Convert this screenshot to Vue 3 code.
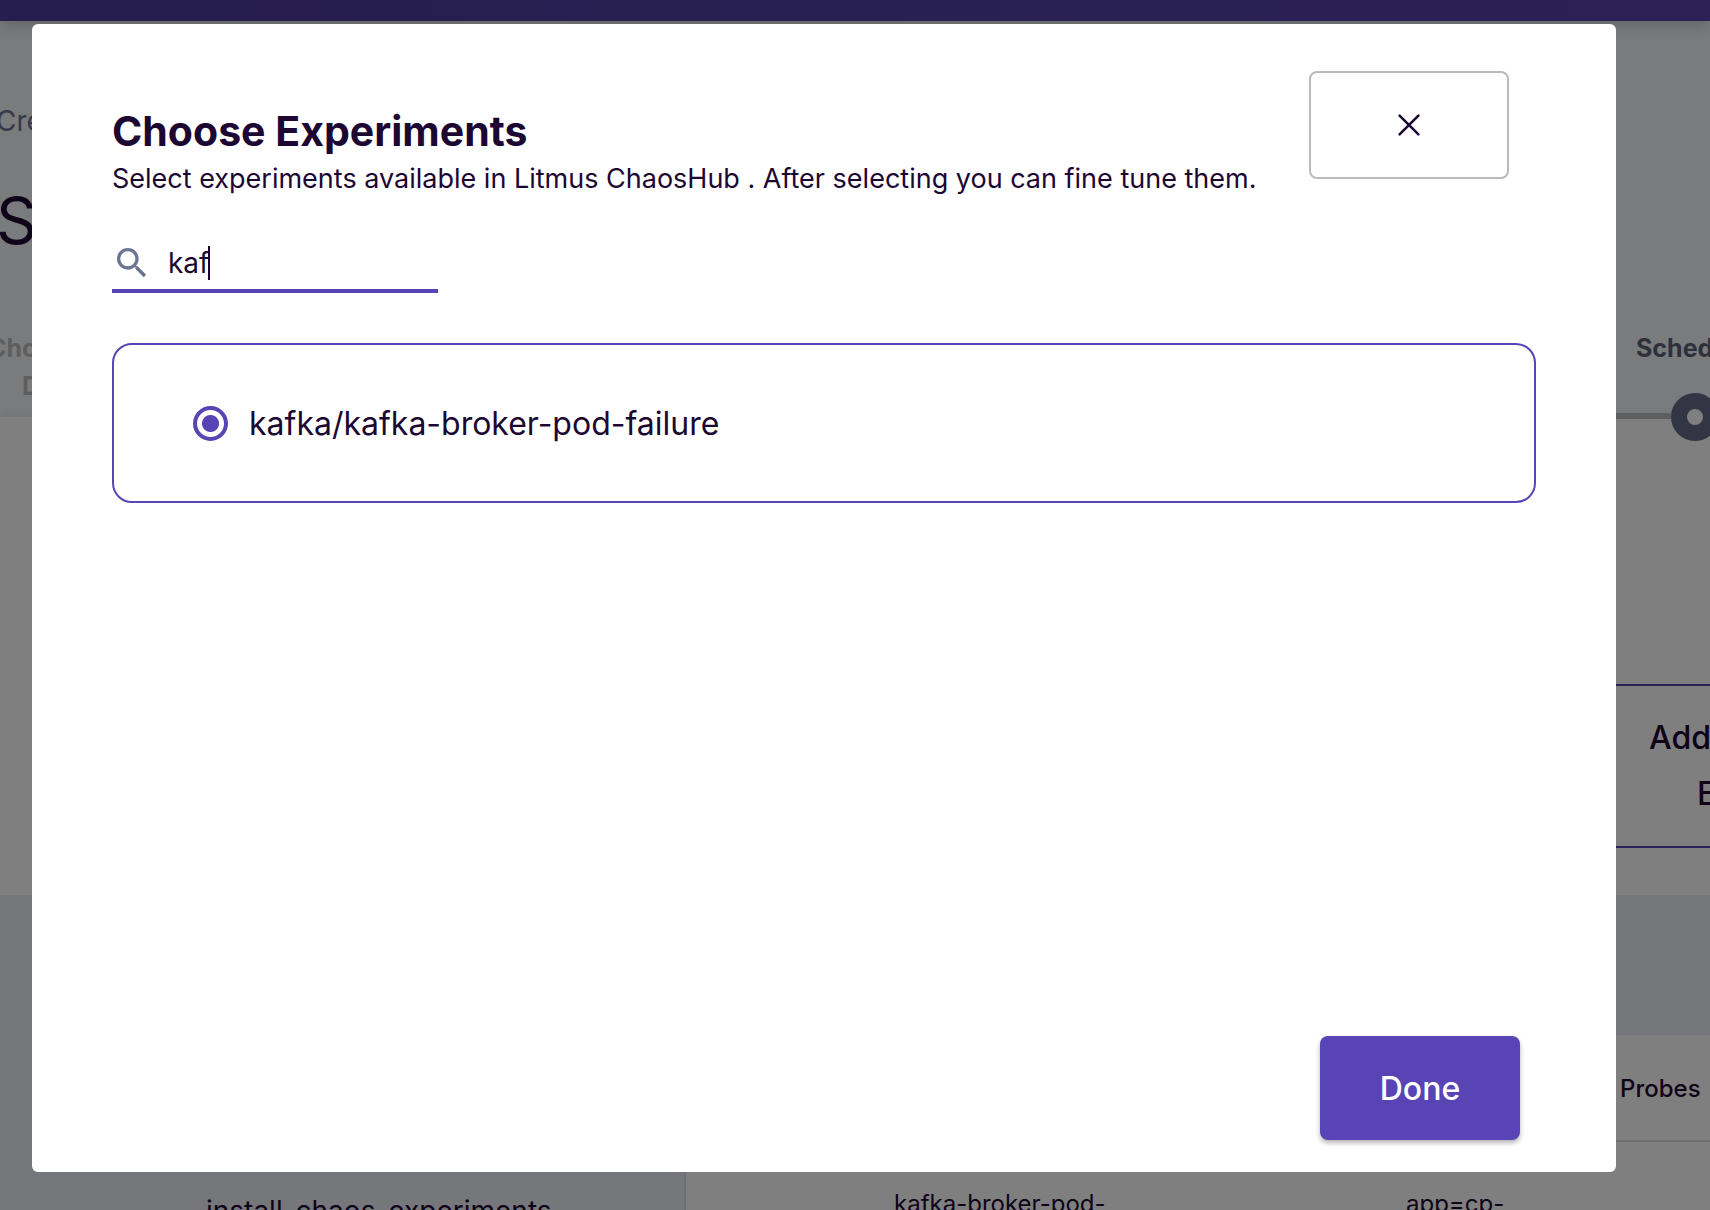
<script setup>
import { ref, onMounted } from 'vue'

const query = ref('kaf')
const experiments = ['kafka/kafka-broker-pod-failure']
const selected = ref(experiments[0])
const searchBox = ref(null)

onMounted(() => searchBox.value.focus())
</script>

<template>
  <div class="page">
    <header class="topbar"></header>
    <main class="wizard">
      <section class="intro">
        <p class="crumb">Cre</p>
        <h1 class="heading">S</h1>
        <div class="steps">
          <p class="step-done">Cho<br /><span class="step-second">D</span></p>
          <p class="step-next">Sched</p>
        </div>
      </section>
      <section class="panel">
        <div class="track">
          <span class="track-line"></span>
          <span class="track-dot"></span>
        </div>
        <button class="add" type="button">Add<br /><span class="add-second">E</span></button>
      </section>
      <section class="details">
        <div class="graph">install-chaos-experiments</div>
        <table class="table">
          <thead>
            <tr><th colspan="2"></th><th class="probes">Probes</th></tr>
          </thead>
          <tbody>
            <tr><td class="name">kafka-broker-pod-</td><td class="app">app=cp-</td><td></td></tr>
          </tbody>
        </table>
      </section>
    </main>

    <div class="overlay">
      <div class="modal" role="dialog" aria-labelledby="modal-title">
        <div class="modal-head">
          <div class="modal-titles">
            <h2 id="modal-title" class="title">Choose Experiments</h2>
            <p class="subtitle">Select experiments available in Litmus ChaosHub . After selecting you can fine tune them.</p>
          </div>
          <button class="close" type="button" aria-label="Close">
            <svg width="24" height="24" viewBox="0 0 28 28" fill="none" stroke="currentColor" stroke-width="3" stroke-linecap="round"><path d="M3 3 25 25M25 3 3 25" /></svg>
          </button>
        </div>
        <label class="search">
          <svg class="search-icon" width="40" height="40" viewBox="0 0 24 24" fill="currentColor" aria-hidden="true"><path d="M15.5 14h-.79l-.28-.27C15.41 12.59 16 11.11 16 9.5 16 5.91 13.09 3 9.5 3S3 5.91 3 9.5 5.91 16 9.5 16c1.61 0 3.09-.59 4.23-1.57l.27.28v.79l5 4.99L20.49 19l-4.99-5zm-6 0C7.01 14 5 11.99 5 9.5S7.01 5 9.5 5 14 7.01 14 9.5 11.99 14 9.5 14z" /></svg>
          <input ref="searchBox" v-model="query" class="search-input" type="text" aria-label="Search experiments" spellcheck="false" />
          <span class="caret" aria-hidden="true"></span>
        </label>
        <div class="list">
          <label v-for="name in experiments" :key="name" class="option">
            <input v-model="selected" class="radio" type="radio" name="experiment" :value="name" />
            <span>{{ name }}</span>
          </label>
        </div>
        <button class="done" type="button">Done</button>
      </div>
    </div>
  </div>
</template>

<style>
body {
  margin: 0;
}
</style>

<style scoped>
* {
  box-sizing: border-box;
}
.page {
  height: 100vh;
  overflow: hidden;
  display: flex;
  flex-direction: column;
  background: #f4f6f9;
  color: #1c0732;
  font-family: Inter, sans-serif;
  font-size: 28px;
}
p,
h1,
h2 {
  margin: 0;
}
button {
  font: inherit;
}
.topbar {
  flex: none;
  height: 21px;
  background: linear-gradient(90deg, #4c3c9c, #5642ae);
  box-shadow: 0 4px 16px rgba(0, 0, 0, 0.2);
  z-index: 1;
}
.wizard {
  flex: 1;
  min-height: 0;
  display: flex;
  flex-direction: column;
}
.intro {
  flex: none;
  height: 396px;
  padding-top: 80px;
}
.crumb {
  margin-left: -4px;
  line-height: 40px;
  color: #72728f;
}
.heading {
  margin: 40px 0 0 -4px;
  font-size: 64px;
  font-weight: 400;
  line-height: 80px;
}
.steps {
  display: flex;
  justify-content: space-between;
  margin-top: 68px;
  font-size: 25px;
  font-weight: 700;
  line-height: 38px;
}
.step-done {
  margin-left: -12px;
  color: #bcbcbe;
}
.step-second {
  margin-left: 34px;
}
.step-next {
  width: 74px;
  color: #5e6076;
}
.panel {
  flex: none;
  height: 478px;
  background: #fff;
  box-shadow: 0 -1px 12px rgba(0, 0, 0, 0.08);
  display: flex;
  flex-direction: column;
  align-items: flex-end;
}
.track {
  display: flex;
  align-items: center;
  height: 48px;
  margin: -24px -9px 0 0;
}
.track-line {
  width: 80px;
  height: 6px;
  margin-top: -2px;
  background: #bcbcbc;
}
.track-dot {
  width: 48px;
  height: 48px;
  border: 16px solid #686a88;
  border-radius: 50%;
  background: #fff;
}
.add {
  width: 160px;
  height: 164px;
  margin-top: 243px;
  padding: 0 0 0 99px;
  border: solid #5844b4;
  border-width: 2px 0;
  background: none;
  color: #1c0732;
  font-size: 32px;
  font-weight: 500;
  line-height: 56px;
  text-align: left;
}
.add-second {
  margin-left: 48px;
}
.details {
  flex: 1;
  min-height: 0;
  display: flex;
  align-items: flex-start;
  padding-top: 140px;
  background: #edeff7;
}
.graph {
  flex: none;
  width: 40%;
  padding: 156px 0 0 206px;
  line-height: 40px;
}
.table {
  flex: none;
  width: 60%;
  border-collapse: collapse;
  background: #fff;
  border-left: 2px solid #dcdce4;
  font-size: 24px;
  height: 240px;
}
.table th,
.table td {
  padding: 0;
  text-align: left;
  vertical-align: top;
}
.table th {
  height: 106px;
  border-bottom: 2px solid #dcdcdc;
  vertical-align: middle;
  padding-top: 2px;
}
.table .probes {
  width: 90px;
  font-weight: 500;
}
.table td {
  line-height: 32px;
  padding-top: 46px;
}
.table .name {
  padding-left: 208px;
}
.table .app {
  width: 214px;
}
.overlay {
  position: fixed;
  inset: 0;
  z-index: 2;
  display: flex;
  padding: 24px 94px 38px 32px;
  background: rgba(0, 0, 0, 0.5);
}
.modal {
  flex: 1;
  display: flex;
  flex-direction: column;
  padding: 47px 80px 32px;
  border-radius: 6px;
  background: #fff;
}
.modal-head {
  display: flex;
  justify-content: space-between;
  padding-right: 27px;
}
.modal-titles {
  padding-top: 36px;
}
.title {
  font-size: 41px;
  font-weight: 700;
  line-height: 48px;
}
.subtitle {
  font-size: 27px;
  line-height: 48px;
  white-space: nowrap;
}
.close {
  width: 200px;
  height: 108px;
  flex: none;
  display: flex;
  align-items: center;
  justify-content: center;
  border: 2px solid #bababa;
  border-radius: 8px;
  background: none;
  color: #1c0732;
}
.search {
  position: relative;
  display: flex;
  align-items: center;
  width: 326px;
  height: 60px;
  margin-top: 30px;
  padding-top: 4px;
  border-bottom: 4px solid #5844b4;
}
.search-icon {
  flex: none;
  color: #6b7490;
}
.search-input {
  flex: 1;
  min-width: 0;
  height: 40px;
  padding: 0;
  margin-left: 16px;
  border: 0;
  outline: 0;
  background: none;
  color: inherit;
  font: inherit;
  caret-color: transparent;
}
.caret {
  position: absolute;
  left: 96px;
  top: 13px;
  width: 2px;
  height: 34px;
  background: #1c0732;
}
.list {
  flex: 1;
  margin-top: 50px;
}
.option {
  display: flex;
  align-items: center;
  height: 160px;
  padding-left: 79px;
  border: 2px solid #5844b4;
  border-radius: 20px;
  font-size: 32px;
}
.radio {
  appearance: none;
  width: 35px;
  height: 35px;
  margin: 0 21px 0 0;
  border: 4px solid #5844b4;
  border-radius: 50%;
  background: radial-gradient(circle, #5844b4 8px, transparent 9px);
}
.done {
  align-self: flex-end;
  width: 200px;
  height: 104px;
  margin-right: 16px;
  border: 0;
  border-radius: 8px;
  background: #5844b4;
  box-shadow: 0 3px 5px rgba(0, 0, 0, 0.3);
  color: #fff;
  font-size: 32px;
  font-weight: 500;
}
</style>
